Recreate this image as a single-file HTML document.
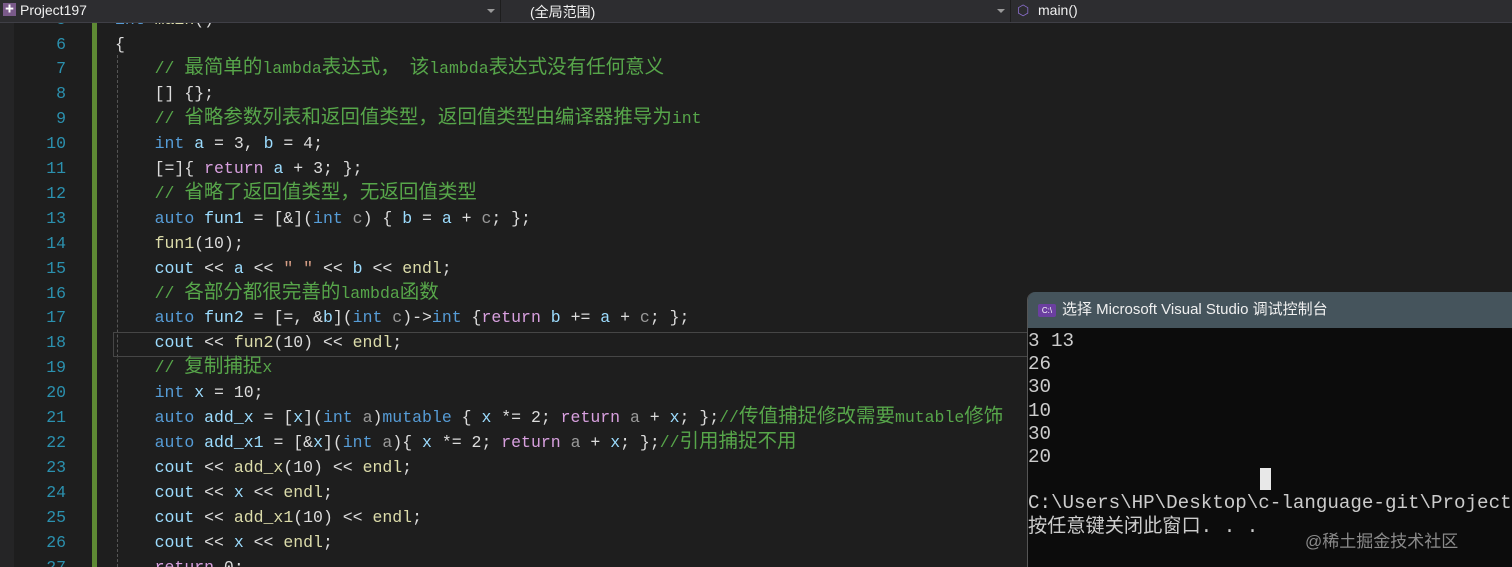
<!DOCTYPE html>
<html style="overflow:hidden;height:567px"><head><meta charset="utf-8"><style>
html,body{overflow:hidden}
body{margin:0;width:1512px;height:567px;overflow:hidden;background:#1e1e1e;position:relative;font-family:"Liberation Mono","Noto Sans CJK SC",monospace}
.top{position:absolute;left:0;top:0;width:1512px;height:22px;background:#2d2d30;border-bottom:1px solid #3f3f46;font-family:"Liberation Sans","Noto Sans CJK SC",sans-serif;font-size:14px;color:#f1f1f1;z-index:5}
.top span{position:absolute;top:2px}
.sep{position:absolute;top:0;width:1px;height:22px;background:#1e1e1e}
.arr{position:absolute;top:9px;width:0;height:0;border-left:4px solid transparent;border-right:4px solid transparent;border-top:4px solid #999}
.gut{position:absolute;left:0;top:22px;width:14px;height:545px;background:#252526}
.green{position:absolute;left:92px;top:22px;width:5px;height:545px;background:#5e8a34}
.dash{position:absolute;left:117px;top:55px;height:512px;border-left:1px dashed #555}
.lines{position:absolute;left:0;top:7.6px;width:1030px;height:560px;overflow:hidden;font-size:16.5px;line-height:24.9px;color:#dcdcdc;white-space:pre}
.ln{display:inline-block;width:66px;text-align:right;color:#2b91af;margin-right:49px}
.k{color:#569cd6}.c{color:#57a64a}.v{color:#9cdcfe}.f{color:#dcdcaa}.r{color:#d8a0df}.p{color:#9a9a9a}.s{color:#d69d85}
i{font-style:normal;font-size:19.5px;line-height:10px}
.hl{position:absolute;left:113px;top:332px;width:917px;height:23px;border:1px solid #464646}
.con{position:absolute;left:1027px;top:292px;width:485px;height:275px;background:#0c0c0c;border-left:1px solid #555;border-top-left-radius:8px;overflow:hidden}
.tb{height:36px;background:#45545c;color:#f0f0f0;font-family:"Liberation Sans","Noto Sans CJK SC",sans-serif;font-size:15px;line-height:36px;padding-left:34px;position:relative}
.ico{position:absolute;left:10px;top:12px;width:18px;height:13px;background:#6b3fa0;border-radius:2px;font-size:8px;line-height:13px;color:#fff;text-align:center}
.out{font-family:"Liberation Mono","Noto Sans CJK SC",monospace;font-size:19.2px;line-height:23.2px;color:#cccccc;white-space:pre;margin-top:2px}
.cur{position:absolute;left:232px;top:176px;width:11px;height:22px;background:#e8e8e8}
.wm{position:absolute;left:1305px;top:527px;font-family:"Liberation Sans","Noto Sans CJK SC",sans-serif;font-size:17px;color:#8a8a8a}
</style></head><body>
<div class="gut"></div>
<div class="green"></div>
<div class="dash"></div>
<div class="hl"></div>
<div class="lines"><span class="ln">5</span><span class="k">int</span> <span class="f">main</span>()
<span class="ln">6</span>{
<span class="ln">7</span>    <span class="c">// <i>最简单的</i>lambda<i>表达式，</i> <i>该</i>lambda<i>表达式没有任何意义</i></span>
<span class="ln">8</span>    [] {};
<span class="ln">9</span>    <span class="c">// <i>省略参数列表和返回值类型，返回值类型由编译器推导为</i>int</span>
<span class="ln">10</span>    <span class="k">int</span> <span class="v">a</span> = 3, <span class="v">b</span> = 4;
<span class="ln">11</span>    [=]{ <span class="r">return</span> <span class="v">a</span> + 3; };
<span class="ln">12</span>    <span class="c">// <i>省略了返回值类型，无返回值类型</i></span>
<span class="ln">13</span>    <span class="k">auto</span> <span class="v">fun1</span> = [&amp;](<span class="k">int</span> <span class="p">c</span>) { <span class="v">b</span> = <span class="v">a</span> + <span class="p">c</span>; };
<span class="ln">14</span>    <span class="f">fun1</span>(10);
<span class="ln">15</span>    <span class="v">cout</span> &lt;&lt; <span class="v">a</span> &lt;&lt; <span class="s">" "</span> &lt;&lt; <span class="v">b</span> &lt;&lt; <span class="f">endl</span>;
<span class="ln">16</span>    <span class="c">// <i>各部分都很完善的</i>lambda<i>函数</i></span>
<span class="ln">17</span>    <span class="k">auto</span> <span class="v">fun2</span> = [=, &amp;<span class="v">b</span>](<span class="k">int</span> <span class="p">c</span>)-&gt;<span class="k">int</span> {<span class="r">return</span> <span class="v">b</span> += <span class="v">a</span> + <span class="p">c</span>; };
<span class="ln">18</span>    <span class="v">cout</span> &lt;&lt; <span class="f">fun2</span>(10) &lt;&lt; <span class="f">endl</span>;
<span class="ln">19</span>    <span class="c">// <i>复制捕捉</i>x</span>
<span class="ln">20</span>    <span class="k">int</span> <span class="v">x</span> = 10;
<span class="ln">21</span>    <span class="k">auto</span> <span class="v">add_x</span> = [<span class="v">x</span>](<span class="k">int</span> <span class="p">a</span>)<span class="k">mutable</span> { <span class="v">x</span> *= 2; <span class="r">return</span> <span class="p">a</span> + <span class="v">x</span>; };<span class="c">//<i>传值捕捉修改需要</i>mutable<i>修饰</i></span>
<span class="ln">22</span>    <span class="k">auto</span> <span class="v">add_x1</span> = [&amp;<span class="v">x</span>](<span class="k">int</span> <span class="p">a</span>){ <span class="v">x</span> *= 2; <span class="r">return</span> <span class="p">a</span> + <span class="v">x</span>; };<span class="c">//<i>引用捕捉不用</i></span>
<span class="ln">23</span>    <span class="v">cout</span> &lt;&lt; <span class="f">add_x</span>(10) &lt;&lt; <span class="f">endl</span>;
<span class="ln">24</span>    <span class="v">cout</span> &lt;&lt; <span class="v">x</span> &lt;&lt; <span class="f">endl</span>;
<span class="ln">25</span>    <span class="v">cout</span> &lt;&lt; <span class="f">add_x1</span>(10) &lt;&lt; <span class="f">endl</span>;
<span class="ln">26</span>    <span class="v">cout</span> &lt;&lt; <span class="v">x</span> &lt;&lt; <span class="f">endl</span>;
<span class="ln">27</span>    <span class="r">return</span> 0;</div>
<div class="top">
<span style="left:3px;top:3px;width:13px;height:13px;background:#7a5a8a;font-size:9px;line-height:13px;color:#fff;text-align:center">✚</span>
<span style="left:20px">Project197</span>
<div class="arr" style="left:487px"></div><div class="sep" style="left:500px"></div>
<span style="left:530px">(全局范围)</span>
<div class="arr" style="left:997px"></div><div class="sep" style="left:1010px"></div>
<span style="left:1017px;color:#8c6fd0">⬡</span>
<span style="left:1038px">main()</span>
</div>
<div class="con">
<div class="tb"><div class="ico">C:\</div>选择 Microsoft Visual Studio 调试控制台</div>
<div class="out">3 13
26
30
10
30
20

C:\Users\HP\Desktop\c-language-git\Project
按任意键关闭此窗口. . .</div>
<div class="cur"></div>
</div>
<div class="wm">@稀土掘金技术社区</div>
</body></html>
